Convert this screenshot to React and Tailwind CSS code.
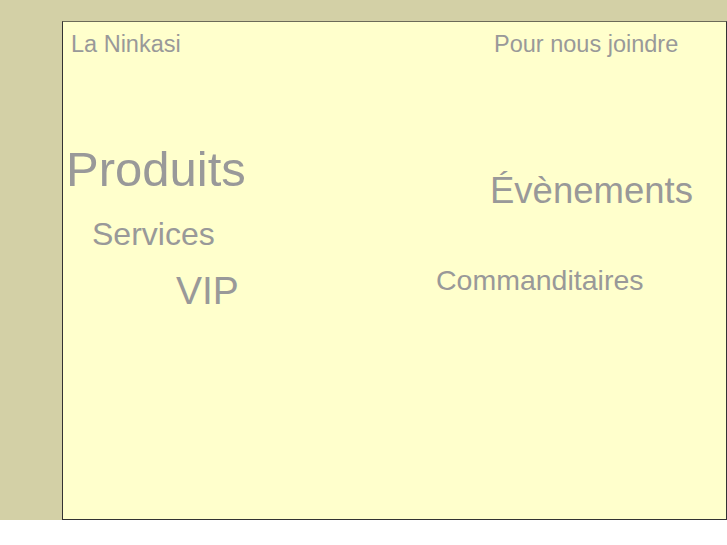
export default function App() {
  return (
    <main className="min-h-[545px] bg-white font-['Liberation_Sans',Arial,sans-serif] text-[#999999]">
      <div className="h-[520px] bg-[#d3d0a6] pl-[62px] pt-[21px]">
        <section className="flex h-[499px] w-[665px] flex-col border border-[#333333] border-t-[#6c6b58] bg-[#ffffcc] leading-none whitespace-nowrap">
          <div className="mt-[11px] grid grid-cols-[360px_1fr] items-start">
            <a className="pl-[8px] text-[23.5px]">La Ninkasi</a>
            <a className="pl-[71px] text-[23.5px]">Pour nous joindre</a>
          </div>

          <div className="mt-[88px] grid grid-cols-[360px_1fr] items-start">
            <a className="pl-[3px] text-[49px]">Produits</a>
            <a className="mt-[28px] pl-[67px] text-[36.5px]">Évènements</a>
          </div>

          <div className="mt-[9px]">
            <a className="block pl-[29px] text-[32px]">Services</a>
          </div>

          <div className="mt-[16px] grid grid-cols-[360px_1fr] items-start">
            <a className="mt-[5px] pl-[113px] text-[39px]">VIP</a>
            <a className="pl-[13px] text-[28.5px]">Commanditaires</a>
          </div>
        </section>
      </div>
    </main>
  );
}
